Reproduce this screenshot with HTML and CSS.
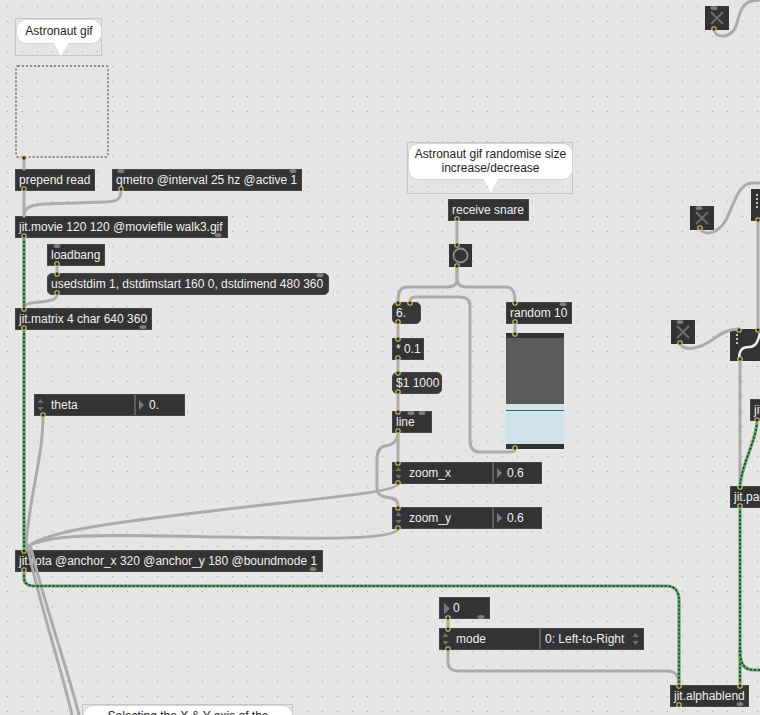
FILE: index.html
```html
<!DOCTYPE html>
<html>
<head>
<meta charset="utf-8">
<title>Patcher</title>
<link rel="stylesheet" href="styles.css">
</head>
<body>
<div class="patcher">
  <svg class="grid" width="760" height="715">
    <defs>
      <pattern id="dots" x="7" y="6" width="15" height="15" patternUnits="userSpaceOnUse">
        <rect width="1" height="1" fill="#a4a4a4"/>
      </pattern>
    </defs>
    <rect width="760" height="715" fill="url(#dots)"/>
  </svg>

  <!-- comments -->
  <div class="comment c1"><div class="bubble b1">Astronaut gif</div></div>
  <div class="comment c2"><div class="bubble b2">Astronaut gif randomise size<br>increase/decrease</div></div>
  <div class="comment c3"><div class="bubble b3">Selecting the X &amp; Y axis of the</div></div>

  <div class="pwindow"></div>

  <!-- objects -->
  <div class="obj prepend">prepend read</div>
  <div class="obj qmetro">qmetro @interval 25 hz @active 1</div>
  <div class="obj movie">jit.movie 120 120 @moviefile walk3.gif</div>
  <div class="obj loadbang">loadbang</div>
  <div class="obj msg usedst">usedstdim 1, dstdimstart 160 0, dstdimend 480 360</div>
  <div class="obj matrix">jit.matrix 4 char 640 360</div>

  <div class="attr theta">
    <div class="lab"><svg class="updn" width="7" height="14" viewBox="0 0 7 14"><path d="M3.5 1 L6.5 5 L0.5 5Z M0.5 9 L6.5 9 L3.5 13Z"/></svg><span>theta</span></div>
    <div class="sep"></div>
    <div class="val"><svg class="tri" width="5" height="10" viewBox="0 0 5 10"><path d="M0 0 L5 5 L0 10Z"/></svg><span>0.</span></div>
  </div>

  <div class="obj rota">jit.rota @anchor_x 320 @anchor_y 180 @boundmode 1</div>

  <div class="obj receive">receive snare</div>
  <div class="bang"><svg width="23" height="23" viewBox="0 0 23 23"><circle cx="11.5" cy="11.5" r="7"/></svg></div>
  <div class="obj msg six">6.</div>
  <div class="obj random">random 10</div>
  <div class="obj mul">* 0.1</div>
  <div class="obj msg dollar">$1 1000</div>
  <div class="obj line">line</div>

  <div class="slider">
    <div class="sl-bar"></div>
    <div class="sl-fill"></div>
    <div class="sl-lb1"></div>
    <div class="sl-knob"></div>
    <div class="sl-lb2"></div>
    <div class="sl-bar"></div>
  </div>

  <div class="attr zoomx">
    <div class="lab"><svg class="updn" width="7" height="14" viewBox="0 0 7 14"><path d="M3.5 1 L6.5 5 L0.5 5Z M0.5 9 L6.5 9 L3.5 13Z"/></svg><span>zoom_x</span></div>
    <div class="sep"></div>
    <div class="val"><svg class="tri" width="5" height="10" viewBox="0 0 5 10"><path d="M0 0 L5 5 L0 10Z"/></svg><span>0.6</span></div>
  </div>
  <div class="attr zoomy">
    <div class="lab"><svg class="updn" width="7" height="14" viewBox="0 0 7 14"><path d="M3.5 1 L6.5 5 L0.5 5Z M0.5 9 L6.5 9 L3.5 13Z"/></svg><span>zoom_y</span></div>
    <div class="sep"></div>
    <div class="val"><svg class="tri" width="5" height="10" viewBox="0 0 5 10"><path d="M0 0 L5 5 L0 10Z"/></svg><span>0.6</span></div>
  </div>

  <div class="obj num0"><svg class="tri" width="6" height="11" viewBox="0 0 6 11"><path d="M0 0 L6 5.5 L0 11Z"/></svg><span>0</span></div>

  <div class="attr mode">
    <div class="lab"><svg class="updn" width="7" height="14" viewBox="0 0 7 14"><path d="M3.5 1 L6.5 5 L0.5 5Z M0.5 9 L6.5 9 L3.5 13Z"/></svg><span>mode</span></div>
    <div class="sep"></div>
    <div class="val menu"><span>0: Left-to-Right</span><svg class="updn" width="7" height="14" viewBox="0 0 7 14"><path d="M3.5 1 L6.5 5 L0.5 5Z M0.5 9 L6.5 9 L3.5 13Z"/></svg></div>
  </div>

  <div class="obj alpha">jit.alphablend</div>

  <!-- right side -->
  <div class="toggle t1"><svg width="24" height="24" viewBox="0 0 24 24"><path d="M6 6 L18 18 M18 6 L6 18"/></svg></div>
  <div class="toggle t2"><svg width="24" height="24" viewBox="0 0 24 24"><path d="M6 6 L18 18 M18 6 L6 18"/></svg></div>
  <div class="toggle t3"><svg width="24" height="24" viewBox="0 0 24 24"><path d="M6 6 L18 18 M18 6 L6 18"/></svg></div>

  <div class="gate g0"><svg width="30" height="32" viewBox="0 0 30 32"><path class="dotline" d="M6 5 L6 19"/></svg></div>
  <div class="gate g1"><svg width="40" height="32" viewBox="0 0 40 32"><path class="dotline" d="M7 5 L7 17"/><path class="scurve" d="M9 31 C9 20 13 18 19 18 C26 18 28 12 30 4"/></svg></div>
  <div class="obj ji">jit.</div>
  <div class="obj jitpa">jit.pack</div>

  <!-- cables -->
  <svg class="cables" width="760" height="715">
    <g class="grey">
      <path d="M24 158 L24 169"/>
      <path d="M24 190 L24 216"/>
      <path d="M121 190 C121 200 116 202 104 202 L44 204 C30 205 24 208 24 216"/>
      <path d="M57 265 L57 273"/>
      <path d="M57 294 C57 300 50 301 40 302 C28 303 24 304 24 308"/>
      <path d="M43 416 C43 460 28 500 26 548"/>
      <path d="M457 220 L457 244"/>
      <path d="M457 267 L457 279 C457 286 452 287 444 287 L408 287 C400 287 398 292 398 302"/>
      <path d="M457 267 L457 279 C457 286 462 287 470 287 L505 287 C513 287 515 292 515 302"/>
      <path d="M515 323 L515 333"/>
      <path d="M515 449 C515 452 512 452 505 452 L480 452 C473 452 470 448 470 440 L470 306 C470 299 466 297 459 297 L416 297 C411 297 410 299 410 302"/>
      <path d="M398 323 L398 338"/>
      <path d="M398 359 L398 372"/>
      <path d="M398 393 L398 411"/>
      <path d="M398 432 L398 462"/>
      <path d="M398 432 C398 442 392 445 385 446 C379 447 377 452 377 460 L377 488 C377 496 384 497 391 498 C397 499 398 502 398 507"/>
      <path d="M398 484 C394 493 320 498 220 510 C120 522 45 530 26 548"/>
      <path d="M398 529 C394 540 320 539 220 537 C120 535 45 532 26 548"/>
      <path d="M28 548 C38 600 62 670 72 715"/>
      <path d="M31 548 C43 600 68 670 79 715"/>
      <path d="M448 619 L448 628"/>
      <path d="M448 650 L448 662 C448 669 452 671 460 671 L667 671 C675 671 679 675 679 685"/>
      <path d="M714 30 C716 38 728 38 734 30 C740 20 738 4 752 1 L760 0"/>
      <path d="M700 229 C705 236 718 234 726 220 C734 204 738 184 752 183 L760 183"/>
      <path d="M680 344 C686 352 700 348 712 340 C722 333 728 329 739 329"/>
      <path d="M758 221 L758 329"/>
      <path d="M740 360 L740 486"/>
    </g>
    <g class="jit">
      <path class="base" d="M24 237 L24 308"/>
      <path class="dash" d="M24 237 L24 308"/>
      <path class="base" d="M24 329 L24 550"/>
      <path class="dash" d="M24 329 L24 550"/>
      <path class="base" d="M24 571 L24 578 C24 584 28 586 36 586 L667 586 C675 586 679 592 679 600 L679 685"/>
      <path class="dash" d="M24 571 L24 578 C24 584 28 586 36 586 L667 586 C675 586 679 592 679 600 L679 685"/>
      <path class="base" d="M740 507 L740 685"/>
      <path class="dash" d="M740 507 L740 685"/>
      <path class="base" d="M740 650 C740 664 744 670 754 670 L760 670"/>
      <path class="dash" d="M740 650 C740 664 744 670 754 670 L760 670"/>
      <path class="base" d="M757 421 C757 440 742 462 740 486"/>
      <path class="dash" d="M757 421 C757 440 742 462 740 486"/>
    </g>
    <g class="uports">
      <ellipse cx="121" cy="171" rx="3.5" ry="2"/>
      <ellipse cx="293" cy="171" rx="3.5" ry="2"/>
      <ellipse cx="218" cy="235" rx="3.5" ry="2"/>
      <ellipse cx="143" cy="327" rx="3.5" ry="2"/>
      <ellipse cx="57" cy="246" rx="3.5" ry="2"/>
      <ellipse cx="320" cy="275" rx="3.5" ry="2"/>
      <ellipse cx="313" cy="569" rx="3.5" ry="2"/>
      <ellipse cx="563" cy="304" rx="3.5" ry="2"/>
      <ellipse cx="481" cy="617" rx="3.5" ry="2"/>
      <ellipse cx="740" cy="704" rx="3.5" ry="2"/>
      <ellipse cx="714" cy="8" rx="3.5" ry="2"/>
      <ellipse cx="699" cy="208" rx="3.5" ry="2"/>
      <ellipse cx="680" cy="322" rx="3.5" ry="2"/>
      <ellipse cx="422" cy="413" rx="3.5" ry="2"/>
      <ellipse cx="411" cy="413" rx="3.5" ry="2"/>
    </g>
    <g class="ports">
      <circle cx="24" cy="158" r="2.2"/>
      <circle cx="24" cy="189" r="2.2"/>
      <circle cx="121" cy="189" r="2.2"/>
      <circle cx="24" cy="236" r="2.2"/>
      <circle cx="24" cy="309" r="2.2"/>
      <circle cx="57" cy="264" r="2.2"/>
      <circle cx="57" cy="274" r="2.2"/>
      <circle cx="57" cy="293" r="2.2"/>
      <circle cx="24" cy="328" r="2.2"/>
      <circle cx="24" cy="551" r="2.2"/>
      <circle cx="24" cy="570" r="2.2"/>
      <circle cx="43" cy="415" r="2.2"/>
      <circle cx="457" cy="219" r="2.2"/>
      <circle cx="457" cy="245" r="2.2"/>
      <circle cx="457" cy="266" r="2.2"/>
      <circle cx="398" cy="303" r="2.2"/>
      <circle cx="410" cy="303" r="2.2"/>
      <circle cx="515" cy="303" r="2.2"/>
      <circle cx="515" cy="322" r="2.2"/>
      <circle cx="515" cy="334" r="2.2"/>
      <circle cx="515" cy="448" r="2.2"/>
      <circle cx="398" cy="322" r="2.2"/>
      <circle cx="398" cy="339" r="2.2"/>
      <circle cx="398" cy="358" r="2.2"/>
      <circle cx="398" cy="373" r="2.2"/>
      <circle cx="398" cy="392" r="2.2"/>
      <circle cx="398" cy="412" r="2.2"/>
      <circle cx="398" cy="431" r="2.2"/>
      <circle cx="398" cy="463" r="2.2"/>
      <circle cx="398" cy="483" r="2.2"/>
      <circle cx="398" cy="508" r="2.2"/>
      <circle cx="398" cy="528" r="2.2"/>
      <circle cx="448" cy="618" r="2.2"/>
      <circle cx="448" cy="629" r="2.2"/>
      <circle cx="448" cy="649" r="2.2"/>
      <circle cx="679" cy="686" r="2.2"/>
      <circle cx="740" cy="686" r="2.2"/>
      <circle cx="679" cy="705" r="2.2"/>
      <circle cx="714" cy="29" r="2.2"/>
      <circle cx="700" cy="228" r="2.2"/>
      <circle cx="680" cy="343" r="2.2"/>
      <circle cx="739" cy="330" r="2.2"/>
      <circle cx="740" cy="359" r="2.2"/>
      <circle cx="740" cy="487" r="2.2"/>
      <circle cx="740" cy="506" r="2.2"/>
      <circle cx="757" cy="420" r="2.2"/>
      <circle cx="758" cy="220" r="2.2"/>
      <circle cx="758" cy="330" r="2.2"/>
    </g>
  </svg>
</div>
</body>
</html>
```

FILE: styles.css
```css
html, body {
  margin: 0;
  padding: 0;
  background: #e5e5e5;
}

.patcher {
  position: relative;
  width: 760px;
  height: 715px;
  overflow: hidden;
  background: #e5e5e5;
  font-family: "Liberation Sans", Arial, sans-serif;
  font-size: 12px;
}

.grid, .cables {
  position: absolute;
  left: 0;
  top: 0;
}
.cables { pointer-events: none; }

/* ---------- object boxes ---------- */
.obj {
  position: absolute;
  box-sizing: border-box;
  height: 22px;
  padding: 0 3px;
  background: #333333;
  border: 1px solid #474747;
  color: #f0f0f0;
  line-height: 20px;
  white-space: nowrap;
  overflow: hidden;
}
.msg { border-radius: 5px; background: #383838; }

.prepend  { left: 15px;  top: 169px; width: 80px; }
.qmetro   { left: 112px; top: 169px; width: 190px; }
.movie    { left: 15px;  top: 216px; width: 213px; }
.loadbang { left: 47px;  top: 244px; width: 58px; }
.usedst   { left: 47px;  top: 273px; width: 282px; }
.matrix   { left: 15px;  top: 308px; width: 137px; }
.rota     { left: 15px;  top: 550px; width: 308px; }
.receive  { left: 448px; top: 199px; width: 81px; }
.six      { left: 392px; top: 302px; width: 29px; }
.random   { left: 506px; top: 302px; width: 66px; }
.mul      { left: 392px; top: 338px; width: 32px; }
.dollar   { left: 392px; top: 372px; width: 50px; }
.line     { left: 392px; top: 411px; width: 40px; }
.alpha    { left: 670px; top: 685px; width: 79px; }
.ji       { left: 750px; top: 399px; width: 40px; }
.jitpa    { left: 730px; top: 486px; width: 60px; }

.num0 {
  left: 439px;
  top: 597px;
  width: 51px;
  display: flex;
  align-items: center;
  gap: 3px;
  padding-left: 4px;
}

.tri { fill: #7b7b7b; flex: none; }
.updn { fill: #6f6f6f; flex: none; }

/* ---------- attrui ---------- */
.attr {
  position: absolute;
  box-sizing: border-box;
  height: 22px;
  display: flex;
  background: #333333;
  border: 1px solid #474747;
  color: #f0f0f0;
  line-height: 20px;
  white-space: nowrap;
}
.attr .lab {
  width: 99px;
  display: flex;
  align-items: center;
  gap: 7px;
  padding-left: 2px;
  box-sizing: border-box;
}
.attr .sep { width: 2px; background: #5e5e5e; }
.attr .val {
  flex: 1;
  display: flex;
  align-items: center;
  gap: 5px;
  padding-left: 3px;
}
.attr .menu { justify-content: space-between; padding: 0 4px 0 4px; }

.theta { left: 34px;  top: 394px; width: 151px; }
.zoomx { left: 392px; top: 462px; width: 150px; }
.zoomy { left: 392px; top: 507px; width: 150px; }
.mode  { left: 439px; top: 628px; width: 205px; }

/* ---------- bang ---------- */
.bang {
  position: absolute;
  left: 449px;
  top: 244px;
  width: 23px;
  height: 23px;
  background: #333333;
}
.bang svg { display: block; }
.bang circle { fill: none; stroke: #8e8e8e; stroke-width: 1.8; }

/* ---------- slider ---------- */
.slider {
  position: absolute;
  left: 506px;
  top: 333px;
  width: 58px;
  height: 116px;
  display: flex;
  flex-direction: column;
}
.sl-bar  { height: 5px; background: #333333; }
.sl-fill { height: 66px; background: #5a5a5a; }
.sl-lb1  { height: 6px; background: #cfe4ea; }
.sl-knob { height: 1px; background: #3d5c63; }
.sl-lb2  { flex: 1; background: #cfe4ea; }

/* ---------- toggles & gates ---------- */
.toggle {
  position: absolute;
  width: 24px;
  height: 24px;
  background: #333333;
}
.toggle svg { display: block; }
.toggle path { stroke: #6c6c6c; stroke-width: 2; fill: none; }
.t1 { left: 705px; top: 6px; }
.t2 { left: 690px; top: 206px; }
.t3 { left: 671px; top: 320px; }

.gate {
  position: absolute;
  height: 32px;
  background: #333333;
}
.gate svg { display: block; }
.g0 { left: 751px; top: 189px; width: 30px; }
.g1 { left: 730px; top: 329px; width: 40px; }
.dotline { stroke: #f2f2f2; stroke-width: 1.5; stroke-dasharray: 2 2; fill: none; }
.scurve { stroke: #f2f2f2; stroke-width: 2.5; fill: none; }

/* ---------- pwindow ---------- */
.pwindow {
  position: absolute;
  left: 15px;
  top: 65px;
  width: 94px;
  height: 93px;
  box-sizing: border-box;
  border: 2px dotted #8b8b8b;
  border-radius: 3px;
}

/* ---------- comments ---------- */
.comment {
  position: absolute;
  box-sizing: border-box;
  border: 1px solid #c6c6c6;
}
.bubble {
  position: absolute;
  left: 1px;
  top: 1px;
  box-sizing: border-box;
  background: #ffffff;
  border-radius: 9px;
  box-shadow: 0 0 0 1px #d6d6d6;
  color: #1e1e1e;
  text-align: center;
  line-height: 14px;
  white-space: nowrap;
}
.bubble::after {
  content: "";
  position: absolute;
  top: 100%;
  width: 0;
  height: 0;
  border-left: 7px solid transparent;
  border-right: 7px solid transparent;
  border-top: 13px solid #ffffff;
}
.c1 { left: 15px; top: 18px; width: 87px; height: 38px; }
.b1 { width: 84px; height: 23px; padding-top: 4px; }
.b1::after { left: 37px; }

.c2 { left: 407px; top: 142px; width: 166px; height: 52px; }
.b2 { width: 163px; height: 35px; padding-top: 3px; }
.b2::after { left: 75px; border-top-width: 14px; }

.c3 { left: 82px; top: 704px; width: 211px; height: 44px; }
.b3 { width: 208px; height: 40px; padding-top: 3px; }

/* ---------- cables ---------- */
.grey path {
  fill: none;
  stroke: #ababab;
  stroke-width: 3;
  stroke-linecap: round;
}
.jit path { fill: none; }
.jit .base { stroke: #5aa866; stroke-width: 3.2; }
.jit .dash { stroke: #1e2b20; stroke-width: 1.4; stroke-dasharray: 2 2; }

.ports circle {
  fill: #2e2e2e;
  stroke: #cfc974;
  stroke-width: 1.1;
}
.uports ellipse { fill: #7d7d7d; }
```
